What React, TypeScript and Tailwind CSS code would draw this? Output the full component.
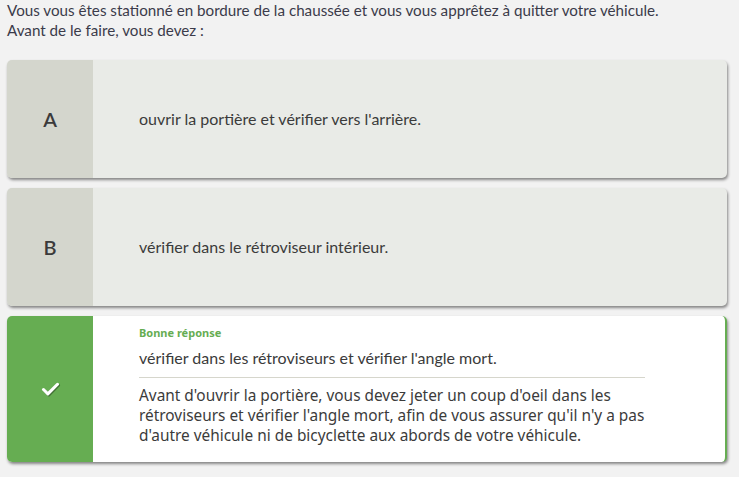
import { Check } from "lucide-react";

interface OptionProps {
  letter: string;
  text: string;
}

function Option({ letter, text }: OptionProps) {
  return (
    <div className="flex h-[118px] rounded-[5px] bg-[#e9ebe7] shadow-[1px_2px_3px_rgba(0,0,0,0.45)] overflow-hidden">
      <div className="w-[86px] shrink-0 bg-[#d4d6cd] flex items-center justify-center text-[20px] font-semibold text-[#3b3b3b]">
        {letter}
      </div>
      <div className="flex items-center pl-[46px] text-[16px] text-[#3b3b3b]">{text}</div>
    </div>
  );
}

export default function App() {
  return (
    <div
      className="w-[739px] h-[477px] bg-[#f2f2f2] overflow-hidden"
      style={{ fontFamily: "Lato, 'Open Sans', sans-serif" }}
    >
      <p className="px-[7px] text-[15.2px] leading-[20px] text-[#3b3b4a]">
        Vous vous êtes stationné en bordure de la chaussée et vous vous apprêtez à quitter votre véhicule.
        <br />
        Avant de le faire, vous devez :
      </p>

      <div className="flex flex-col gap-[10px] pl-[7px] pr-[12px] pt-[20px]">
        <Option letter="A" text="ouvrir la portière et vérifier vers l'arrière." />
        <Option letter="B" text="vérifier dans le rétroviseur intérieur." />

        <div className="flex h-[146px] rounded-[5px] bg-white border-r-2 border-[#66ad52] shadow-[1px_2px_3px_rgba(0,0,0,0.45)] overflow-hidden">
          <div className="w-[86px] shrink-0 bg-[#66ad52] flex items-center justify-center">
            <Check
              className="w-[21px] h-[21px] text-white drop-shadow-[1px_1px_0px_rgba(0,0,0,0.35)]"
              strokeWidth={3.5}
            />
          </div>
          <div className="pl-[46px] pt-[9px] w-[552px]">
            <div
              className="text-[11px] font-bold text-[#66ad52] leading-[16px]"
              style={{ fontFamily: "'Noto Sans', sans-serif" }}
            >
              Bonne réponse
            </div>
            <div className="mt-[6px] text-[16px] leading-[21px] text-[#3b3b3b] pb-[9px] border-b border-[#d6d6cc]">
              vérifier dans les rétroviseurs et vérifier l'angle mort.
            </div>
            <p
              className="mt-[8px] w-[516px] text-[15.4px] leading-[20px] text-[#3b3b3b]"
              style={{ fontFamily: "'Noto Sans', sans-serif" }}
            >
              Avant d'ouvrir la portière, vous devez jeter un coup d'oeil dans les rétroviseurs et vérifier
              l'angle mort, afin de vous assurer qu'il n'y a pas d'autre véhicule ni de bicyclette aux abords de
              votre véhicule.
            </p>
          </div>
        </div>
      </div>
    </div>
  );
}
